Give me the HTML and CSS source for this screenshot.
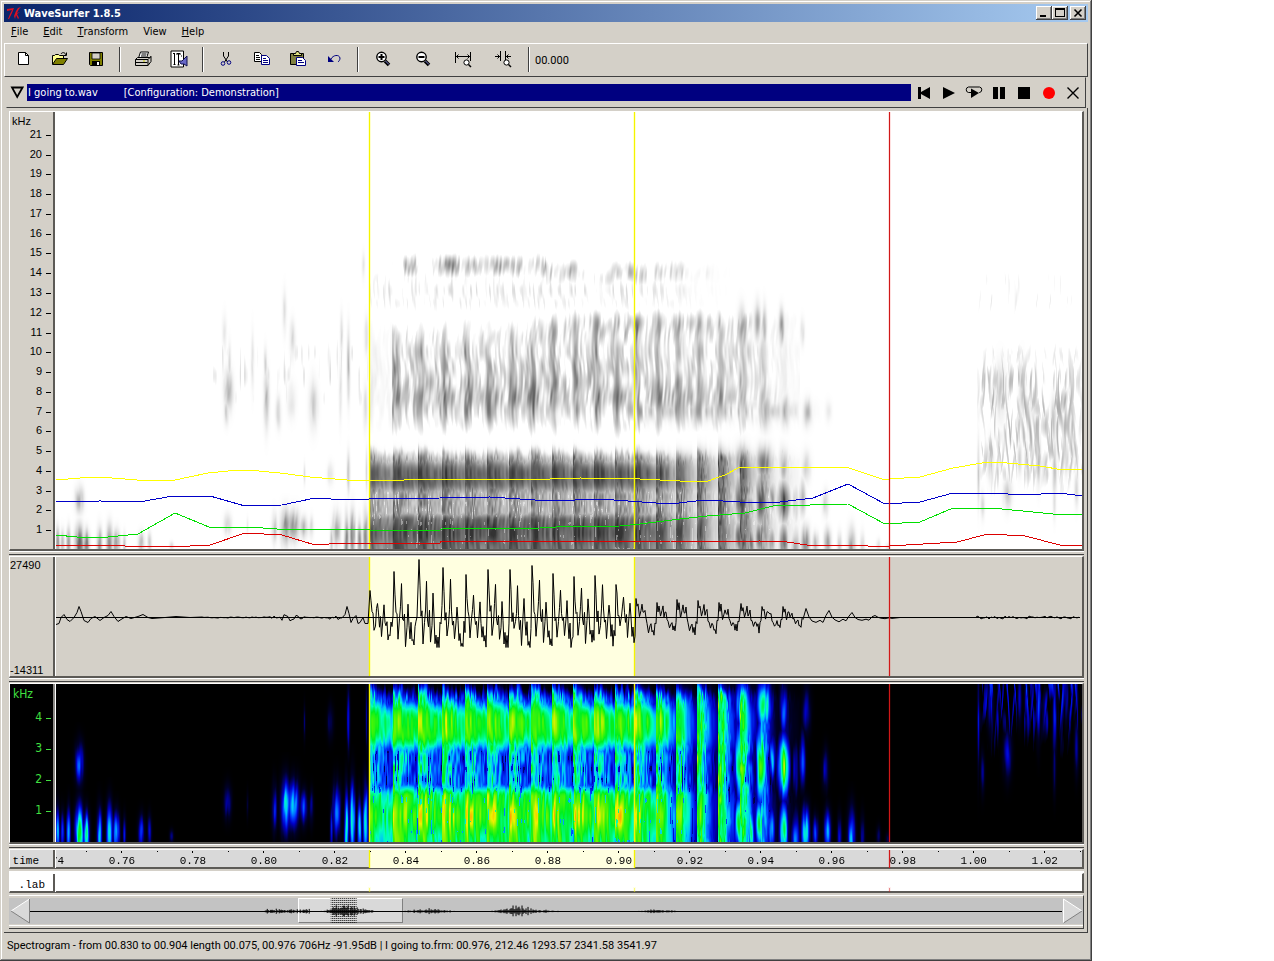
FILE: index.html
```html
<!DOCTYPE html>
<html lang="en">
<head>
<meta charset="utf-8">
<title>WaveSurfer 1.8.5</title>
<link rel="stylesheet" href="styles.css">
</head>
<body>
<main class="window">
  <header class="titlebar">
    <svg class="logo" viewBox="0 0 16 16" width="16" height="16" aria-hidden="true">
      <path d="M1 4 L8 3 L6 8 L3 14 L2 14 L4 9 L6 5 L1 6Z" fill="#e01020"/>
      <path d="M15 2 L12 3 L10 6 L8 11 L9 14 L10 10 L12 14 L13 13 L11 9 L14 7 L11 8 L13 4Z" fill="#e01020"/>
    </svg>
    <h1 class="caption">WaveSurfer 1.8.5</h1>
    <button class="win-btn" aria-label="Minimize"><svg viewBox="0 0 12 10" width="12" height="10"><rect x="2" y="7" width="6" height="2"/></svg></button>
    <button class="win-btn" aria-label="Maximize"><svg viewBox="0 0 12 10" width="12" height="10"><path d="M1 0h10v9H1zM2 2v6h8V2z" fill-rule="evenodd"/></svg></button>
    <button class="win-btn win-close" aria-label="Close"><svg viewBox="0 0 12 10" width="12" height="10"><path d="M2.500 1.500l7 7M9.500 1.500l-7 7" stroke="#000" stroke-width="1.600"/></svg></button>
  </header>

  <nav class="menubar">
    <button><u>F</u>ile</button><button><u>E</u>dit</button><button><u>T</u>ransform</button><button>View</button><button><u>H</u>elp</button>
  </nav>

  <div class="toolbar">
    <button class="tool" aria-label="New"><svg viewBox="0 0 16 16" width="16" height="16"><path d="M2.500 1.500h7l3 3v9h-10z" fill="#fff" stroke="#000"/><path d="M9.500 1.500v3h3" fill="none" stroke="#000"/></svg></button>
    <button class="tool" aria-label="Open"><svg viewBox="0 0 18 16" width="18" height="16"><path d="M1.500 13V4.500h2l1-1h3l1 1h4V7" fill="#ffff90" stroke="#000"/><path d="M1.500 13.500l4-6h11l-4 6z" fill="#808000" stroke="#000"/><path d="M10 3c1-2 4-2 5 1M15.500 1.500v3h-3" fill="none" stroke="#000"/></svg></button>
    <button class="tool" aria-label="Save"><svg viewBox="0 0 16 16" width="16" height="16"><path d="M1.500 1.500h13v13h-12l-1-1z" fill="#808000" stroke="#000"/><path d="M4 2h8v6H4z" fill="#d4d0c8" stroke="#000" stroke-width=".8"/><path d="M4 10h8v4.500H4z"/><path d="M9 11h2v3H9z" fill="#fff"/></svg></button>
    <span class="tool-sep"></span>
    <button class="tool" aria-label="Print"><svg viewBox="0 0 18 16" width="18" height="16"><path d="M4.500 7l2-6h8l-2 6z" fill="#fff" stroke="#000"/><path d="M7.500 3h5M7 5h5" stroke="#000"/><path d="M1.500 8.500l2-2h12l1.500-1v5l-3 4h-12.500z" fill="#d4d0c8" stroke="#000"/><path d="M1.500 8.500h12.500v6M14 8.500l3-3M1.500 11.500h12" fill="none" stroke="#000"/><path d="M9 9.500h2v1H9z" fill="#c8c800"/></svg></button>
    <button class="tool" aria-label="Preferences"><svg viewBox="0 0 18 18" width="18" height="18"><path d="M1 1h12.500v16H1z" fill="#fff" stroke="#000"/><path d="M3 4l1-1 1 1M4.500 3v12M3.500 14.500h2M6 4h5M8.500 3v12M7 3.500h3M7.500 15h2M11 6h1" stroke="#000" fill="none"/><path d="M9 11h3l5-5v10l-3-2h-3z" fill="#6868c8" stroke="#101050"/></svg></button>
    <span class="tool-sep"></span>
    <button class="tool" aria-label="Cut"><svg viewBox="0 0 16 16" width="16" height="16"><path d="M5.500 1v4l4 6M10.500 1v4l-4 6" fill="none" stroke="#000"/><circle cx="5" cy="12.500" r="1.800" fill="none" stroke="#000080"/><circle cx="11" cy="11.500" r="1.800" fill="none" stroke="#000080"/></svg></button>
    <button class="tool" aria-label="Copy"><svg viewBox="0 0 18 16" width="18" height="16"><path d="M1.500 1.500h5l2 2v7h-7z" fill="#fff" stroke="#000"/><path d="M3 4.500h3M3 6.500h4M3 8.500h4" stroke="#000"/><path d="M8.500 4.500h5l3 3v6h-8z" fill="#fff" stroke="#000080"/><path d="M10 7.500h3M10 9.500h5M10 11.500h5" stroke="#000080"/></svg></button>
    <button class="tool" aria-label="Paste"><svg viewBox="0 0 18 16" width="18" height="16"><path d="M1.500 2.500h13v11h-13z" fill="#808040" stroke="#000"/><path d="M4.500 4.500v-2h2l1-2h2l1 2h2v2z" fill="#e0e080" stroke="#000"/><path d="M7.500 6.500h6l3 3v5h-9z" fill="#fff" stroke="#000080"/><path d="M9 9.500h4M9 11.500h6" stroke="#000080"/></svg></button>
    <button class="tool" aria-label="Undo"><svg viewBox="0 0 16 16" width="16" height="16"><path d="M5 8c2-4 8-5 9-1 0 2-1 3-2 4" fill="none" stroke="#000080"/><path d="M2 5v6h6z" fill="#000080"/></svg></button>
    <span class="tool-sep"></span>
    <button class="tool tool-wide" aria-label="Zoom in"><svg viewBox="0 0 16 16" width="16" height="16"><path d="M10 10l4 4" stroke="#000" stroke-width="3.500"/><path d="M10.500 10l3.500 3.500" stroke="#8080d0"/><circle cx="6.500" cy="6" r="4.700" fill="#fff" stroke="#000" stroke-width="1.400"/><path d="M3.500 6h6M6.500 3v6" stroke="#000" stroke-width="2"/></svg></button>
    <button class="tool tool-wide" aria-label="Zoom out"><svg viewBox="0 0 16 16" width="16" height="16"><path d="M10 10l4 4" stroke="#000" stroke-width="3.500"/><path d="M10.500 10l3.500 3.500" stroke="#8080d0"/><circle cx="6.500" cy="6" r="4.700" fill="#fff" stroke="#000" stroke-width="1.400"/><path d="M3.500 6h6" stroke="#000" stroke-width="2"/></svg></button>
    <button class="tool tool-wide" aria-label="Zoom to selection"><svg viewBox="0 0 18 18" width="18" height="18"><path d="M1.500 2v11M16.500 2v9M2 6.500h14M4.500 4.500l-2 2 2 2M13.500 4.500l2 2-2 2" fill="none" stroke="#000"/><circle cx="12.500" cy="12.500" r="2.600" fill="#fff" stroke="#000"/><path d="M14.500 14.500l2.500 2.500" stroke="#000" stroke-width="1.500"/></svg></button>
    <button class="tool tool-wide" aria-label="Zoom full out"><svg viewBox="0 0 18 18" width="18" height="18"><path d="M6.500 1v10M11.500 1v9M1 6.500h5M12 6.500h5M3.500 4.500l2 2-2 2M14.500 4.500l-2 2 2 2" fill="none" stroke="#000"/><circle cx="12.500" cy="12.500" r="2.600" fill="#fff" stroke="#000"/><path d="M14.500 14.500l2.500 2.500" stroke="#000" stroke-width="1.500"/></svg></button>
    <span class="tool-sep"></span>
    <output class="clock">00.000</output>
  </div>

  <section class="sound">
    <div class="sound-bar">
      <button class="fold" aria-label="Collapse"><svg viewBox="0 0 14 13" width="14" height="13"><path d="M2 1.500h10.500L7.200 11z" fill="none" stroke="#000" stroke-width="1.800"/></svg></button>
      <h2 class="sound-name"><span>I going to.wav</span><span>[Configuration: Demonstration]</span></h2>
      <div class="transport">
        <button aria-label="Go to start"><svg viewBox="0 0 14 14" width="14" height="14"><path d="M1 1h3v5l9-5v12L4 8v5H1z"/></svg></button>
        <button aria-label="Play"><svg viewBox="0 0 14 14" width="14" height="14"><path d="M1 1l12 6-12 6z"/></svg></button>
        <button aria-label="Play loop"><svg viewBox="0 0 20 14" width="20" height="14"><path d="M7 6.500H4.500a2.800 2.800 0 0 1 0-5.500h11a2.800 2.800 0 0 1 0 5.500H15" fill="none" stroke="#000"/><path d="M7 2.500l8 4.500-8 5z"/></svg></button>
        <button aria-label="Pause"><svg viewBox="0 0 14 14" width="14" height="14"><path d="M1 1h5v12H1zM8 1h5v12H8z"/></svg></button>
        <button aria-label="Stop"><svg viewBox="0 0 14 14" width="14" height="14"><path d="M1 1h12v12H1z"/></svg></button>
        <button aria-label="Record"><svg viewBox="0 0 14 14" width="14" height="14"><circle cx="7" cy="7" r="6" fill="#f00"/></svg></button>
        <button aria-label="Close sound"><svg viewBox="0 0 14 14" width="14" height="14"><path d="M1.500 1.500l11 11M12.500 1.500l-11 11" stroke="#000" stroke-width="1.400"/></svg></button>
      </div>
    </div>

    <div class="panes">
      <div class="pane pane-spectrogram">
        <div class="axis">
          <span class="axis-unit">kHz</span>
          <ol class="axis-scale"><li>21</li><li>20</li><li>19</li><li>18</li><li>17</li><li>16</li><li>15</li><li>14</li><li>13</li><li>12</li><li>11</li><li>10</li><li>9</li><li>8</li><li>7</li><li>6</li><li>5</li><li>4</li><li>3</li><li>2</li><li>1</li></ol>
        </div>
        <div class="plot">
          <canvas class="layer" id="spectrogram" width="1026" height="437"></canvas>
          <i class="mark mark-start"></i><i class="mark mark-end"></i>
          <svg class="layer formants" viewBox="56 112 1026 437" preserveAspectRatio="none">
            <polyline stroke="#ffff00" points="56,480 80,478 100,477 137,480 175,480 208,473 228,471 248,470 280,473 310,477 347,480 404,480 405,479 550,479 580,478 640,479 680,481 705,482 725,475 740,467 800,467 849,468 885,480 889,479 920,477 953,468 988,462 1007,463 1040,466 1063,470 1082,469"/>
            <polyline stroke="#0000c8" points="56,502 100,501 139,502 173,496 210,496 245,506 282,505 315,498 347,500 369,499 440,498 490,497 550,501 600,499 670,504 705,500 740,502 780,502 813,498 848,484 885,504 920,502 953,493 992,493 1023,495 1060,493 1082,496"/>
            <polyline stroke="#00e000" points="56,535 77,537 108,537 138,534 175,513 209,527 248,527 277,529 369,529 370,530 440,530 442,529 540,528 556,527 620,526 640,524 680,519 707,516 745,513 773,506 848,504 885,524 920,522 953,508 992,508 1053,514 1082,515"/>
            <polyline stroke="#dc0000" points="56,545 120,545 125,546 190,546 210,545 245,533 282,535 315,545 343,543 440,543 441,541 670,541 705,542 760,541 787,542 807,545 860,545 868,546 889,546 957,542 988,534 1025,536 1060,545 1082,545"/>
          </svg>
          <i class="mark mark-cursor"></i>
        </div>
      </div>
      <div class="sash"></div>
      <div class="pane pane-waveform">
        <div class="axis axis-range"><span>27490</span><span>-14311</span></div>
        <div class="plot">
          <i class="selection"></i><i class="mark mark-start"></i><i class="mark mark-end"></i>
          <svg class="layer" viewBox="56 557 1026 119" preserveAspectRatio="none"><path d="M56 617.500H1080" stroke="#000"/><path id="waveform" fill="none" stroke="#000"/></svg>
          <i class="mark mark-cursor"></i>
        </div>
      </div>
      <div class="sash"></div>
      <div class="pane pane-colour">
        <div class="axis">
          <span class="axis-unit">kHz</span>
          <ol class="axis-scale"><li>4</li><li>3</li><li>2</li><li>1</li></ol>
        </div>
        <div class="plot">
          <canvas class="layer" id="colourgram" width="1026" height="158"></canvas>
          <i class="mark mark-start"></i><i class="mark mark-end"></i><i class="mark mark-cursor"></i>
        </div>
      </div>
      <div class="sash"></div>
      <div class="pane pane-time">
        <div class="axis">time</div>
        <div class="plot">
          <i class="selection"></i><i class="mark mark-start"></i><i class="mark mark-end"></i>
          <ol class="ruler"><li>0.74</li><li>0.76</li><li>0.78</li><li>0.80</li><li>0.82</li><li>0.84</li><li>0.86</li><li>0.88</li><li>0.90</li><li>0.92</li><li>0.94</li><li>0.96</li><li>0.98</li><li>1.00</li><li>1.02</li><li></li></ol>
          <i class="mark mark-cursor"></i>
        </div>
      </div>
      <div class="sash sash-thin"></div>
      <div class="pane pane-label">
        <div class="axis">.lab</div>
        <div class="plot"><i class="mark mark-start"></i><i class="mark mark-end"></i><i class="mark mark-cursor"></i></div>
      </div>
      <div class="overview">
        <button class="arrow" aria-label="Scroll left"><svg viewBox="0 0 20 26" width="20" height="26"><path d="M19.500 1v24L1 13z" fill="#d9d9d9"/><path d="M19.500 1L1 13" stroke="#fff"/><path d="M1 13l18.500 12V1" fill="none" stroke="#808080"/></svg></button>
        <div class="overview-track">
          <i class="overview-thumb"></i>
          <svg class="layer" viewBox="30 898 1033 26" preserveAspectRatio="none">
            <defs><pattern id="dots" width="4" height="4" patternUnits="userSpaceOnUse"><path d="M0 0h1v1H0zM2 2h1v1H2zM2 0h1v1H2zM0 2h1v1H0z"/></pattern></defs>
            <rect x="331" y="898" width="26" height="25" fill="url(#dots)"/>
            <path d="M30 911.500H1063" stroke="#000"/><path id="overview-wave" stroke="#000"/>
          </svg>
        </div>
        <button class="arrow" aria-label="Scroll right"><svg viewBox="0 0 20 26" width="20" height="26"><path d="M.5 1v24L19 13z" fill="#d9d9d9"/><path d="M19 13L.5 1v24" fill="none" stroke="#fff"/><path d="M.5 25L19 13" stroke="#808080"/></svg></button>
      </div>
    </div>
  </section>

  <footer class="status">Spectrogram - from 00.830 to 00.904 length 00.075, 00.976 706Hz -91.95dB | I going to.frm: 00.976, 212.46 1293.57 2341.58 3541.97</footer>
</main>
<script src="plots.js"></script>
</body>
</html>
```

FILE: styles.css
```css
* { box-sizing: border-box; }
body {
  margin: 0;
  background: #fff;
  color: #000;
  font: 11px "DejaVu Sans Condensed", "DejaVu Sans", sans-serif;
  --face: #d4d0c8;
  --dark: #404040;
  --shade: #808080;
}
button {
  padding: 0;
  border: 0;
  background: none;
  color: inherit;
  font: inherit;
  display: flex;
  align-items: center;
  justify-content: center;
}
h1, h2, ol { margin: 0; padding: 0; font: inherit; list-style: none; }

.window {
  display: flex;
  flex-direction: column;
  min-height: 100vh;
  margin-right: 182px;
  padding: 4px 4px 1px;
  background: var(--face);
  box-shadow: inset -1px -1px var(--dark), inset 1px 1px var(--face), inset -2px -2px var(--shade), inset 2px 2px #fff;
}

.titlebar {
  display: flex;
  align-items: center;
  height: 18px;
  padding: 0 2px;
  background: linear-gradient(90deg, #0a246a, #a6caf0);
  color: #fff;
}
.caption { flex: 1; padding-left: 2px; font-size: 11px; font-weight: bold; }
.win-btn {
  width: 16px;
  height: 14px;
  background: var(--face);
  box-shadow: inset -1px -1px var(--dark), inset 1px 1px #fff, inset -2px -2px var(--shade);
}
.win-close { margin-left: 2px; }

.menubar { display: flex; gap: 15px; height: 21px; padding: 0 7px 2px; }

.toolbar {
  display: flex;
  align-items: center;
  height: 34px;
  padding: 0 0 2px 1px;
  border: 1px solid #fff;
  border-right-color: var(--dark);
  border-bottom-color: var(--dark);
}
.tool { width: 36px; height: 28px; }
.tool-wide { width: 40px; }
.tool-sep {
  width: 2px;
  height: 25px;
  margin: 0 4px 0 5px;
  background: var(--dark);
  border-right: 1px solid #fff;
}
.clock { padding: 2px 0 0 1px; font-family: Roboto, sans-serif; }

.sound { display: flex; flex-direction: column; flex: 1; }
.sound-bar {
  display: flex;
  align-items: center;
  height: 31px;
  margin: 0 2px;
  border: 1px solid var(--face);
  border-right-color: var(--dark);
  border-bottom-color: var(--dark);
}
.fold { width: 20px; }
.sound-name {
  display: flex;
  flex: 1;
  gap: 26px;
  height: 17px;
  padding-left: 1px;
  background: #000080;
  color: #fff;
  line-height: 17px;
}
.transport { display: flex; }
.transport button { width: 25px; height: 24px; }
.transport button:last-child { width: 24px; }

.panes {
  --sel-start: 30.5%;
  --sel-end: 56.3%;
  --cursor: 81.2%;
  display: flex;
  flex-direction: column;
  flex: 1;
  padding: 3px 3px 3px 5px;
  border-right: 1px solid var(--dark);
  border-bottom: 1px solid var(--dark);
}
.pane {
  display: grid;
  grid-template-columns: 45px minmax(0, 1fr);
  border: 1px solid #fff;
  border-right: 2px solid #5c5a56;
  border-bottom: 2px solid #5c5a56;
}
.pane-spectrogram { flex: 1; min-height: 300px; }
.pane-waveform { height: 122px; }
.pane-colour { height: 161px; color: #40e040; }
.pane-time { height: 20px; background: #d9d9d9; }
.pane-label { height: 20px; background: #fff; }

.sash {
  height: 5px;
  border: solid var(--face);
  border-width: 0 0 1px;
  box-shadow: inset 0 1px #fff, inset 0 -1px var(--dark);
}
.sash-thin { height: 4px; border: 0; box-shadow: inset 0 -2px #fff; }

.axis {
  display: flex;
  flex-direction: column;
  border-right: 2px solid #5c5a56;
  font-family: "Liberation Sans", Arial, sans-serif;
}
.axis-unit { height: 12px; padding-left: 2px; line-height: 19px; }
.axis-scale { display: flex; flex-direction: column; flex: 1; padding-bottom: 10px; }
.axis-scale li {
  display: flex;
  flex: 1;
  align-items: center;
  justify-content: flex-end;
  gap: 4px;
  padding-right: 2px;
  line-height: 14px;
}
.axis-scale li::after { content: ""; width: 5px; height: 1px; margin-top: 3px; background: currentColor; }
.axis-range { justify-content: space-between; padding: 2px 0 0; line-height: 12px; }
.pane-colour .axis { background: #000; border-color: #8c8a86; font-size: 12px; font-family: "DejaVu Sans Condensed", sans-serif; }
.pane-colour .axis-unit { height: 17px; padding-left: 3px; line-height: 21px; }
.pane-colour .axis-scale { padding-bottom: 16px; }
.pane-time .axis, .pane-label .axis {
  padding: 5px 8px 0 0;
  font: 11px/13px "Liberation Mono", "Courier New", monospace;
  text-align: right;
}
.pane-time .axis { padding-right: 14px; }

.plot { position: relative; overflow: hidden; border-left: 1px solid #fff; }
.pane-spectrogram .plot { background: #fff; }
.pane-colour .plot { background: #000; }
.layer { position: absolute; inset: 0; width: 100%; height: 100%; }
.formants { fill: none; shape-rendering: crispEdges; }
.selection { position: absolute; top: 0; bottom: 0; left: var(--sel-start); right: calc(100% - var(--sel-end)); background: #ffffe0; }
.mark { position: absolute; top: 0; bottom: 0; width: 1px; background: #f4f400; box-shadow: 0 0 0 1px rgb(255 255 0 / .2); }
.mark-start { left: var(--sel-start); }
.mark-end { left: var(--sel-end); }
.mark-cursor { left: var(--cursor); background: #d01818; box-shadow: 0 0 0 1px rgb(255 0 0 / .12); }
.pane-label .mark { top: 14px; opacity: .5; }

.ruler {
  position: absolute;
  inset: 0;
  display: flex;
  margin-left: -3.95%;
  font: 11px/13px "Liberation Mono", "Courier New", monospace;
}
.ruler li {
  flex: 0 0 6.657%;
  padding-top: 5px;
  text-align: center;
  background:
    linear-gradient(#000, #000) 50% 1px / 1px 2px no-repeat,
    linear-gradient(#000, #000) 0 1px / 1px 1px no-repeat;
}

.overview {
  display: flex;
  height: 34px;
  margin-top: 2px;
  padding-top: 2px;
  border-top: 1px solid #fff;
  border-right: 1px solid var(--dark);
  border-bottom: 1px solid var(--dark);
  box-shadow: inset 0 -2px var(--face), inset 0 -3px #fff;
}
.arrow { width: 21px; height: 26px; background: #c3c3c3; }
.overview-track { position: relative; flex: 1; height: 26px; background: #c3c3c3; }
.overview-thumb {
  position: absolute;
  top: 0;
  bottom: 1px;
  left: 26%;
  width: 10.1%;
  background: #d9d9d9;
  border: 1px solid #fff;
  border-right-color: var(--shade);
  border-bottom-color: var(--shade);
}

.status {
  height: 27px;
  padding-left: 3px;
  font: 11px/26px Roboto, Arial, sans-serif;
  white-space: nowrap;
}
```

FILE: plots.js
```js
const LEFT = 56;
// Glottal pulses: horizontal position and peak height of the waveform.
const pulses = [
  [370, 27], [394, 46], [419, 58], [443, 50], [466, 43], [488, 48], [510, 48],
  [532, 52], [553, 44], [574, 41], [595, 42], [616, 33], [636, 19], [657, 15],
  [677, 18], [698, 17], [719, 15], [741, 14], [762, 11], [783, 11], [806, 9],
  [829, 7], [852, 5], [875, 2]
];

function hash(i, j) {
  let h = Math.imul(i, 374761393) ^ Math.imul(j + 71, 668265263);
  h = Math.imul(h ^ (h >>> 13), 1274126177);
  return ((h ^ (h >>> 16)) >>> 0) / 4294967296;
}
function noise(x, y) {
  const i = Math.floor(x), j = Math.floor(y);
  let u = x - i, v = y - j;
  u = u * u * (3 - 2 * u);
  v = v * v * (3 - 2 * v);
  const a = hash(i, j) * (1 - u) + hash(i + 1, j) * u;
  const b = hash(i, j + 1) * (1 - u) + hash(i + 1, j + 1) * u;
  return a * (1 - v) + b * v;
}
const bell = (v, c, w) => Math.exp(-(((v - c) / w) ** 2));
const step = (a, b, v) => {
  const t = Math.min(1, Math.max(0, (v - a) / (b - a)));
  return t * t * (3 - 2 * t);
};

// Local patches of energy: x, kHz, half width, half height in kHz, strength.
const patches = [
  [57, .3, 2, .7, .4], [62, .3, 2, .6, .28], [68, .3, 2, .7, .32], [79, .3, 4, .8, .58], [86, .3, 3, .6, .45],
  [99, .2, 2.5, .8, .34], [109, .3, 3, .8, .46], [116, .3, 3, .6, .38], [124, .3, 1.5, .5, .2], [141, .3, 3, .5, .25],
  [149, .3, 2, .5, .2], [171, .2, 2, .2, .12], [79, 2.5, 4, .6, .28],
  [227, 1.3, 3.5, .5, .18], [247, 1.2, 1, .4, .08], [274, 1.1, 2.5, .7, .2], [285, 1.1, 4.5, .8, .42], [293, 1.2, 6, .7, .34], [303, 1.1, 4, .5, .24], [311, 1.1, 2, .5, .15],
  [331, .3, 1.5, .8, .22], [336, 1, 4, .8, .28], [346, .4, 2, 1.1, .52], [352, .7, 2.5, 1.1, .48], [359, .4, 2, .9, .42], [365, .6, 2.5, 1.1, .42],
  [304, 3.8, 1, .5, .12], [330, 3.8, 3, .5, .12], [348, 3.9, 1.5, .9, .2], [366, 4, 1, 1, .15],
  [228, 8, 4, .9, .26], [226, 7, 2.5, .6, .17], [229, 9.3, 1.5, 1, .12], [224, 11, 2, .8, .1], [266, 7.6, 2.5, 1.3, .24], [265, 9.3, 1.5, .8, .16],
  [278, 6.9, 2.5, .7, .16], [292, 10.6, 2.5, .8, .15], [284, 12, 2, 1, .1], [291, 7.5, 4, .8, .1], [313, 7.3, 4, 1.1, .16], [348, 9.2, 1.5, 1.5, .24], [341, 10.9, 1.5, .9, .13], [252, 9.5, 1.5, 1.3, .1],
  [365, 7.2, 2, 1, .14], [366, 10.8, 2, .8, .13], [340, 8, 1.5, 1.4, .11], [363, 14.3, 1.5, .6, .08],
  [742, 4.3, 6.5, .75, .52], [764, 4.3, 7, .75, .54], [783, 4.2, 4, .8, .26], [806, 4.2, 4, .7, .17],
  [740, 2.6, 5, 1.3, .58], [761, 2.5, 5, 1.3, .62], [772, 2.7, 3, .7, .36], [783, 2.4, 5.5, .9, .6], [802, 2.6, 3, .8, .26], [825, 2.3, 3, .6, .17], [795, 2.3, 3, .8, .2],
  [739, .6, 5, .8, .56], [751, .4, 3, .8, .46], [759, .5, 4, .8, .53], [771, .4, 3, .7, .4], [783, .4, 4, .8, .53], [795, .2, 4, .8, .28], [805, .4, 4, .7, .42], [815, .3, 3, .5, .22],
  [827, .4, 3, .6, .38], [839, .2, 2, .6, .2], [851, .2, 3.5, .8, .34], [862, .2, 2, .6, .18], [878, .2, 2, .3, .12], [887, .1, 2, .2, .1],
  [741, 11.3, 3.5, .9, .22], [757, 11.5, 3, .8, .34], [764, 11.3, 2, .9, .28], [781, 11.2, 2.5, .8, .34], [802, 11, 2, .6, .13],
  [744, 9.3, 3, 1.1, .15], [760, 9.2, 2, 1.2, .2], [765, 7, 5, .8, .3], [785, 7, 4, .7, .26], [807, 6.9, 4, .6, .24], [828, 7, 3, .5, .07],
  [1000, 8, 5, 1.2, .18], [1022, 8, 3, 1.2, .18], [1038, 4.5, 2, 1.1, .28], [1054, 4.1, 2, 1.2, .22], [978, 3.9, 1.2, 1.5, .16], [1053, 6.5, 2.5, 1, .2],
  [1007, 2.8, 4, .7, .18], [982, 2.2, 2, .6, .13], [990, 4.5, 3, .9, .16], [1054, 2.4, 1.5, .8, .13], [1076, 3, 2, .8, .15], [1019, 4.6, 2, .7, .2], [1066, 4.7, 2, .8, .18], [1026, 4.5, 2, .7, .16]
];

function pulseAt(x) {
  let k = 0;
  while (k < pulses.length - 2 && x + 1 >= pulses[k + 1][0]) k++;
  return (x + 1 - pulses[k][0]) / (pulses[k + 1][0] - pulses[k][0]);
}

function energy(x, f) {
  const streak = noise(x / 1.9 + 40 + Math.sin(f * 2) * .5, f * 1.3);
  const fine = noise(x / 1.1, f * 3);
  const edge = noise(x / 2.1, 3.5);
  let e = 0;

  for (const [px, pf, w, h, s] of patches) {
    if (Math.abs(x - px) > w * 2.2 || Math.abs(f - pf) > h * 2.2) continue;
    e = Math.max(e, s * bell(x, px, w) * bell(f, pf, h) * (.65 + streak * .6));
  }

  if (x >= 369 && x < 800) {
    const late = step(630, 735, x);
    const d = pulseAt(x);
    const fade = 1 - step(735, 795, x) * .85;
    const start = x < 392 ? .84 : 1;
    const decay = Math.exp(-Math.max(0, d - .2) * (.4 + late * 1.5));
    const low = (.67 - late * .17) * (1 - step(1.45, 2.1 + .2 * edge, f)) * (.86 + .2 * bell(f, .9, .6));
    const formant = (.66 - late * .16) * Math.exp(-((Math.abs(f - 3.75 + d * .12) / (.86 - d * .16 + late * .25 + edge * .22)) ** 3));
    const valley = (.26 + .2 * (1 - d) + late * .08) * (.6 + .8 * fine);
    const hum = 1 - step(4.3 + edge * .3, 5.1 - d * .4 + edge * .5, f);
    let v = Math.max(low * (.78 + .4 * streak), formant * (.82 + .34 * streak), valley * hum);
    if (f < 2.9 && fine < .12) v *= .62;
    v *= decay * fade * start;

    const focus = bell((d + .5) % 1, .58, .16);
    const drift = noise(x / 5, f * .9 + 20);
    const upper = .46 * bell(f, 7.4, 1.6) + .36 * bell(f, 10, 1.7) + .24 * bell(f, 11.4, .7) * step(480, 600, x);
    const crest = .3 * bell(f, x > 545 ? 13.9 : 14.3, .6) * noise(x / 7, f * .7 + 3) * 1.7;
    const wisps = .17 * bell(f, 13, 1.3);
    const high = (upper * (.05 + focus * .55 + streak * .75 + drift * .5) - .2)
      * (x < 392 ? .15 : 1) * (1 - late * .3) * fade;
    v = Math.max(v, high, (crest * (streak + .3) - .11) * (x < 392 ? 0 : 1) * (1 - late), (wisps * streak * 1.7 - .15) * (1 - late));
    e = Math.max(e, v);
  }

  if (x > 635 && x < 832 && f > 5) {
    e = Math.max(e, .25 * bell(f, 7, .5) * (1 - step(745, 832, x)) * streak);
  }
  if (x > 212 && x < 369 && f > 6) {
    e = Math.max(e, .4 * bell(f, 9, 3.2) * noise(x / 2.2, f * .8) - .27);
  }
  if (x > 976) {
    const ramp = step(974, 984, x) * (1 - .4 * step(1070, 1081, x));
    const a = noise(x / 1.9 + 9 + Math.sin(f * 1.3) * .9, f * .8);
    const b = noise(x / 2.3 - Math.sin(f * 1.1 + 2) * 1.1, f * .7 + 50);
    const strands = Math.max(a, b);
    const body = .38 * Math.exp(-((Math.abs(f - 6.6) / 4.6) ** 3));
    e = Math.max(e, (body * strands - .19) * ramp * 1.6, (.3 * bell(f, 12.8, 2.2) * a - .21) * ramp);
  }
  return Math.max(0, e);
}

const grey = e => {
  const v = 255 * (1 - Math.min(.8, e * 1.08));
  return [v, v, v];
};
const stops = [[0, 0, 0, 0], [.06, 0, 0, 40], [.17, 0, 0, 200], [.25, 0, 60, 255], [.35, 0, 190, 255], [.43, 0, 255, 190], [.54, 0, 240, 30], [.64, 90, 245, 0], [.74, 240, 240, 0], [.86, 255, 130, 0], [1, 255, 0, 0]];
const rainbow = e => {
  const k = Math.max(1, stops.findIndex(s => s[0] >= Math.min(e, 1)));
  const a = stops[k - 1], b = stops[k], t = (Math.min(e, 1) - a[0]) / (b[0] - a[0]);
  return [1, 2, 3].map(c => a[c] + (b[c] - a[c]) * t);
};

function drawSpectrogram(id, top, colour) {
  const canvas = document.getElementById(id);
  const ctx = canvas.getContext("2d");
  const image = ctx.createImageData(canvas.width, canvas.height);
  let p = 0;
  for (let y = 0; y < canvas.height; y++) {
    const f = top * (1 - y / canvas.height);
    for (let x = 0; x < canvas.width; x++) {
      const [r, g, b] = colour(energy(x + LEFT, f));
      image.data[p++] = r;
      image.data[p++] = g;
      image.data[p++] = b;
      image.data[p++] = 255;
    }
  }
  ctx.putImageData(image, 0, 0);
}

function drawWaveform() {
  const pts = [[56, -7], [59, -6], [61, 0], [64, 3], [67, -2], [70, -4], [74, 0], [77, 5], [79, 11], [81, 6], [84, -3], [88, -5], [91, -1], [95, 1], [100, -3], [104, 0], [108, 2], [111, 6], [114, 1], [118, -4], [121, -2], [126, 1], [131, -1], [138, 1], [143, 3], [148, 0], [152, -1], [165, 0], [176, 1], [190, 0]];
  for (let x = 200; x < 344; x += 2) {
    const a = .5 + 3 * bell(x, 287, 14) + 2 * step(320, 340, x);
    pts.push([x, (hash(x, 3) - .5) * 2 * a - step(320, 340, x)]);
  }
  pts.push([345, 3], [347, 11], [349, 4], [351, -5], [353, -1], [356, 2], [358, -6], [360, -5], [363, 0], [365, -6], [368, -6]);
  const strong = [[0, 1], [1, .55], [2, .02], [3, .12], [4, -.35], [5.5, -.1], [6.5, .2], [7.5, .65], [8.5, .05], [9.5, -.15], [10.5, .05], [11.5, -.5], [13, -.1], [14, .32], [15, -.05], [16, -.45], [17, -.2], [18, -.6], [19, -.4], [20, -.55], [21, -.1], [22, -.2], [23, .1]];
  const soft = [[0, 1], [1, .5], [2, .8], [3.5, 0], [5, .3], [6, .65], [7, .2], [8, .35], [9, .5], [10, -.1], [11, -.3], [12.5, -.7], [14, -.4], [15, -.3], [16, -.8], [17, -.6], [18, -.95], [19, -.3], [20, -.2]];
  pulses.forEach(([x, h], k) => {
    const next = pulses[k + 1] ? pulses[k + 1][0] : 895;
    const loud = x < 630;
    const shape = x > 795 ? [[0, 1], [3, .1], [6, -.4], [10, -.6], [14, -.3], [17, -.5], [20, .2]] : loud ? strong : soft;
    for (const [dx, v] of shape) {
      if (x + dx >= next - .8) break;
      const size = loud ? 13 : x < 795 ? 5 : 1;
      const jitter = dx ? (hash(k * 20 + dx * 3 | 0, 5) - .5) * size : 0;
      pts.push([x + dx, Math.max(-30, v * h + jitter)]);
    }
  });
  pts.push([900, 0], [976, 0]);
  for (let x = 977; x < 1080; x += 2) pts.push([x, (hash(x, 4) - .5) * 3]);
  document.getElementById("waveform").setAttribute("d", "M" + pts.map(([x, v]) => x + " " + (617.5 - v).toFixed(1)).join("L"));

  let d = "";
  for (let x = 265; x < 690; x++) {
    const a = (x < 310 ? 3 : 0) + 10 * bell(x, 343, 13) + 3 * bell(x, 365, 12) + 3.5 * bell(x, 430, 22) + 6.5 * bell(x, 515, 16) + 2 * bell(x, 540, 22) + 2.5 * bell(x, 658, 18);
    const v = a * (.25 + .75 * hash(x, 7)) * (x % 3 ? .6 : 1);
    if (v > .5) d += `M${x + .5} ${(911.5 - v).toFixed(1)}V${(911.5 + v * .8).toFixed(1)}`;
  }
  document.getElementById("overview-wave").setAttribute("d", d);
}

drawSpectrogram("spectrogram", 22.05, grey);
drawSpectrogram("colourgram", 5, rainbow);
drawWaveform();
```
